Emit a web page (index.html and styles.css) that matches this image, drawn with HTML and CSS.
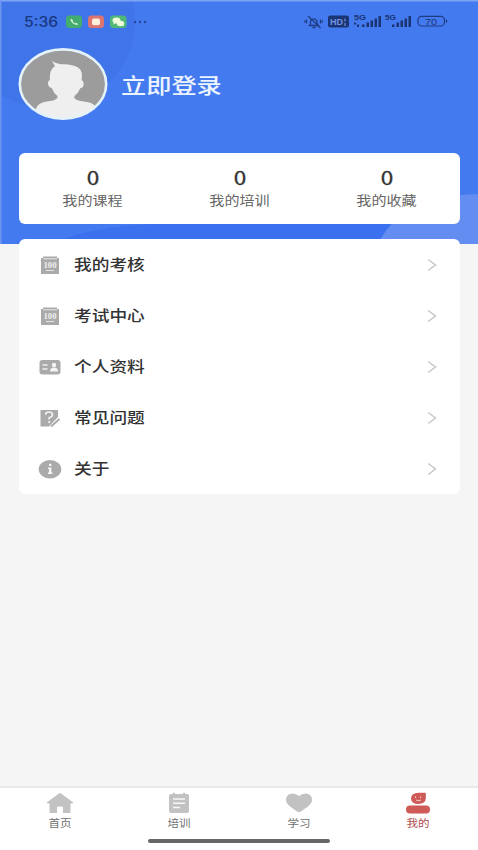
FILE: index.html
```html
<!DOCTYPE html>
<html lang="zh-CN">
<head>
<meta charset="utf-8">
<title>我的</title>
<link rel="stylesheet" href="styles.css">
</head>
<body>
<div class="screen">
  <header class="hero">
    <svg class="hero-art" width="478" height="244" viewBox="0 0 478 244">
      <rect width="478" height="244" fill="#447af0"/>
      <circle cx="47" cy="20" r="88" fill="#4075ea"/>
      <path d="M50 244c30-13 70-20 120-20h220v20z" fill="#3b70ee"/>
      <path d="M378 244c14-30 47-49 100-50v50z" fill="#648df1"/>
      <path d="M0 0h478v1.500H0z" fill="#7fa4f2"/>
      <path d="M0 0h1.500v244H0z" fill="#6c95f0"/>
    </svg>
    <div class="status">
      <span class="clock"><span>5:36</span></span>
      <svg width="84" height="14" viewBox="0 0 84 14">
        <rect x="0" y=".5" width="16" height="12.500" rx="3.500" fill="#43ad70"/>
        <path d="M5 3.700c-1 1 .2 3.200 2.100 4.700 2 1.500 4.200 1.900 5 .8l-1.800-1.400-1.400.6-2.300-2 .4-1.200z" fill="#dff5dc"/>
        <rect x="22" y=".5" width="16" height="12.500" rx="3.500" fill="#dc746f"/>
        <rect x="26" y="3.500" width="8" height="6.800" rx="2" fill="#fff0db"/>
        <rect x="44" y=".5" width="16.500" height="12.500" rx="3.500" fill="#50b876"/>
        <ellipse cx="50.500" cy="5.500" rx="4" ry="3" fill="#effbdc"/><ellipse cx="54.500" cy="8.500" rx="3.700" ry="2.700" fill="#effbdc"/><path d="m48 7.500-1 2 3-1.500m6 2 1.500 1.500-.3-2.500" fill="#effbdc"/>
        <g fill="#244794"><circle cx="69" cy="7" r="1.200"/><circle cx="74" cy="7" r="1.200"/><circle cx="79" cy="7" r="1.200"/></g>
      </svg>
      <svg class="signals" width="146" height="16" viewBox="0 0 146 16">
        <g fill="none" stroke="#1f3b80" stroke-width="1.300"><path d="M5.500 11.500h9l-1.500-2V7a3.500 3.500 0 0 0-6.500 0v2.500zM8.500 13.500h3M4 2l12.500 12M2.500 5.500v4M.8 6.500v2M16.500 5.500v4M18.300 6.500v2"/></g>
        <rect x="24" y="1.500" width="21" height="12" rx="2.500" fill="#1b3474"/>
        <text x="26" y="11" textLength="13" lengthAdjust="spacingAndGlyphs" class="hd">HD</text><path d="M41 4.500v3M41 9v3" stroke="#7094e2" stroke-width="1.200"/>
        <g fill="#1b3474"><text x="50" y="6" textLength="12" lengthAdjust="spacingAndGlyphs" class="net">5G</text><path d="M50 8.500h2v2h-2zM53 10.500h2V13h-2zM58 10.500h2.500V13H58zM62.500 8.500H65V13h-2.500zM66.500 6.500H69V13h-2.500zM70.500 4.500H73V13h-2.500zM74.500 2H77v11h-2.500z"/>
        <text x="81" y="6" textLength="11" lengthAdjust="spacingAndGlyphs" class="net">5G</text><path d="M88 10.500h2.500V13H88zM92.500 8.500H95V13h-2.500zM96.500 6.500H99V13h-2.500zM100.500 4.500h2.500V13h-2.500zM104.500 2h2.500v11h-2.500z"/>
        <text x="121" y="10.500" textLength="12" lengthAdjust="spacingAndGlyphs" class="bat">70</text><path d="M142 5q2.500 2.500 0 4z"/></g>
        <rect x="114" y="2.300" width="26.500" height="9.700" rx="3.800" fill="none" stroke="#1f3b80" stroke-width="1.200"/>
      </svg>
    </div>
    <div class="profile">
      <svg width="90" height="74" viewBox="0 0 90 74">
        <defs><clipPath id="face"><ellipse cx="45" cy="37" rx="42.500" ry="34.500"/></clipPath></defs>
        <ellipse cx="45" cy="37" rx="43.200" ry="34.800" fill="#9c9c9c"/>
        <path clip-path="url(#face)" fill="#efefef" d="M18 74V62q1-5 8-7l9-1.500q5-1 4.500-4.500-4-3-5.800-8-3.800-1-3.700-5 0-2.500 2-3-1-10 5-14l-3-5q4 2.800 9 3.300 6.500-.3 11 1 8 1.500 9.500 7 .8 3 .1 8 2.200.6 2 3.500 0 4-3.300 4.500-2 5-6 8-.5 3.500 5 4.500l9 1.500q7 1.500 8 6.500v14z"/>
        <ellipse cx="45" cy="37" rx="43.200" ry="34.600" fill="none" stroke="#e4f2fb" stroke-width="2.600"/>
      </svg>
      <span class="login"><span>立即登录</span></span>
    </div>
    <section class="stats card">
      <div class="stat"><b>0</b><span>我的课程</span></div>
      <div class="stat"><b>0</b><span>我的培训</span></div>
      <div class="stat"><b>0</b><span>我的收藏</span></div>
    </section>
  </header>
  <main class="menu card">
    <div class="row"><svg class="icon" viewBox="0 0 24 20"><path fill="#aaa" d="M3 3h2V1.500h14V3h2v16H3z"/><path stroke="#e6e6e6" d="M5 3.800h14M8 15.500h8"/><text x="5.500" y="12.500" textLength="13" lengthAdjust="spacingAndGlyphs" class="hundred">100</text></svg><span class="label">我的考核</span><svg class="arrow" viewBox="0 0 10 14"><path d="M1.200 1.500 8.500 7l-7.300 5.500"/></svg></div>
    <div class="row"><svg class="icon" viewBox="0 0 24 20"><path fill="#aaa" d="M3 3h2V1.500h14V3h2v16H3z"/><path stroke="#e6e6e6" d="M5 3.800h14M8 15.500h8"/><text x="5.500" y="12.500" textLength="13" lengthAdjust="spacingAndGlyphs" class="hundred">100</text></svg><span class="label">考试中心</span><svg class="arrow" viewBox="0 0 10 14"><path d="M1.200 1.500 8.500 7l-7.300 5.500"/></svg></div>
    <div class="row"><svg class="icon" viewBox="0 0 24 20"><rect x="1.500" y="3" width="21" height="14.500" rx="3" fill="#aaa"/><path d="M4.500 8h5M4.500 12h5" stroke="#eee" stroke-width="1.400"/><circle cx="16" cy="8" r="2.200" fill="#f4f4f4"/><path d="M12 14.500q0-4 4-4t4 4z" fill="#f4f4f4"/></svg><span class="label">个人资料</span><svg class="arrow" viewBox="0 0 10 14"><path d="M1.200 1.500 8.500 7l-7.300 5.500"/></svg></div>
    <div class="row"><svg class="icon" viewBox="0 0 24 20"><path d="M2.500 2h17.500v7l-9 9.500H2.500z" fill="#aaa"/><path d="m13 18.500 8.500-7.500" stroke="#aaa" stroke-width="2"/><path d="M7.500 6.800Q7.500 4 11 4t3.500 2.800Q14.500 8.700 11.200 9.700v1.800M11.200 13v2" fill="none" stroke="#f1f1f1" stroke-width="1.700"/></svg><span class="label">常见问题</span><svg class="arrow" viewBox="0 0 10 14"><path d="M1.200 1.500 8.500 7l-7.300 5.500"/></svg></div>
    <div class="row"><svg class="icon" viewBox="0 0 24 20"><ellipse cx="12" cy="10.200" rx="11.300" ry="9.200" fill="#aaa"/><path d="M11 4.800h2.400V7H11zM10 8.500h3.400v5h1V15H10v-1.500h1V10h-1z" fill="#f5f5f5"/></svg><span class="label">关于</span><svg class="arrow" viewBox="0 0 10 14"><path d="M1.200 1.500 8.500 7l-7.300 5.500"/></svg></div>
  </main>
  <nav class="tabs">
    <div class="tab"><svg width="28" height="22" viewBox="0 0 28 22"><path d="M14 .8 1 10.200q-.5 1.300 1 1.300h1.500V20q0 1 1 1H11v-5.500q0-1 1-1h4q1 0 1 1V21h6.500q1 0 1-1v-8.500H26q1.500 0 1-1.300z" fill="#c2c2c2"/></svg><span>首页</span></div>
    <div class="tab"><svg width="28" height="22" viewBox="0 0 28 22"><path d="M6 2h2V.8h2V2h8V.8h2V2h2q2 0 2 2v15q0 2-2 2H6q-2 0-2-2V4q0-2 2-2z" fill="#c2c2c2"/><path d="M8 7h12M8 11.200h12M8 15.500h7" stroke="#f7f7f7" stroke-width="1.500"/></svg><span>培训</span></div>
    <div class="tab"><svg width="28" height="22" viewBox="0 0 28 22"><path d="M14 4Q11 1.500 7.500 1.500 1 2 1 8q0 3 4 6.500l7.500 5.300q1.500.8 3 0L23 14.500Q27 11 27 8q0-6-6.500-6.500Q17 1.500 14 4z" fill="#c2c2c2"/></svg><span>学习</span></div>
    <div class="tab active"><svg width="28" height="22" viewBox="0 0 28 22"><path d="M14.500.8H21q.8 0 .8 1v4.700q-.4 5.300-7.300 5.500-7.300-.2-7.500-5.600Q7.200 1 14.500.8z" fill="#ce5b57"/><path d="M11.500 4.500V6M16.500 4.500V6M12 8q2.500 1.500 5 0" fill="none" stroke="#f4cfc9"/><rect x="2" y="13.500" width="24" height="8" rx="4" fill="#ce5b57"/></svg><span>我的</span></div>
    <i class="home-bar"></i>
  </nav>
</div>
</body>
</html>
```
FILE: styles.css
```css
* { box-sizing: border-box; }
body { margin: 0; font-family: "Noto Sans CJK SC", sans-serif; background: #f5f5f5; color: #333; }
svg { display: block; flex: none; }
.screen { height: 850px; display: flex; flex-direction: column; overflow: hidden; }
.hero { position: relative; height: 244px; padding: 13px 18px 0 19px; flex: none; }
.hero-art { position: absolute; left: 0; top: 0; z-index: -1; }
.status { height: 17px; display: flex; align-items: center; padding-left: 5px; }
.clock { width: 42px; font: 500 14px/16px Inter, sans-serif; color: #19377f; }
.clock span { display: inline-block; transform: scaleX(1.12); transform-origin: left; }
.signals { margin-left: 154px; }
.net { font: 700 7px "Liberation Sans", sans-serif; }
.hd { font: 700 9px "Liberation Sans", sans-serif; fill: #7094e2; }
.bat { font: 400 9px "Liberation Sans", sans-serif; }
.hundred { font: 700 7.5px "Liberation Serif", serif; fill: #f0f0f0; }
.profile { display: flex; align-items: center; height: 74px; margin: 17px 0 0 -1px; }
.login { margin-left: 13px; color: #ebf4ff; font-size: 21px; font-weight: 500; line-height: 30px; }
.login span { display: inline-block; transform: scaleX(1.2); transform-origin: left; }
.card { background: #fff; border-radius: 6px; }
.stats { height: 71px; margin-top: 32px; display: flex; }
.stat { flex: 1; display: flex; flex-direction: column; align-items: center; padding-top: 14px; }
.stat b { font: 400 18px/21px "Noto Sans CJK SC", sans-serif; transform: scaleX(1.25); -webkit-text-stroke: .3px #333; }
.stat span { font-size: 13px; line-height: 18px; margin-top: 3px; color: #666; transform: translateX(.5px) scaleX(1.16); }
.menu { position: relative; margin: -5px 18px 0 19px; height: 255px; flex: none; }
.row { height: 51px; display: flex; align-items: center; padding: 0 23px 0 19px; }
.icon { width: 24px; height: 20px; }
.label { margin-left: 12px; padding-bottom: 2px; font-size: 15px; font-weight: 500; transform: scaleX(1.18); transform-origin: left; }
.arrow { width: 10px; height: 14px; margin-left: auto; fill: none; stroke: #c4c4c4; stroke-width: 1.4; }
.tabs { margin-top: auto; position: relative; height: 64px; background: #fff; border-top: 2px solid #e8e8e8; display: flex; }
.tab { flex: 1; display: flex; flex-direction: column; align-items: center; padding-top: 4px; }
.tab span { font-size: 10px; line-height: 14px; margin-top: 2px; color: #707070; transform: scaleX(1.15); }
.active span { color: #b04d4d; }
.home-bar { position: absolute; left: 148px; bottom: 7px; width: 182px; height: 4px; border-radius: 2px; background: #666; }
```
